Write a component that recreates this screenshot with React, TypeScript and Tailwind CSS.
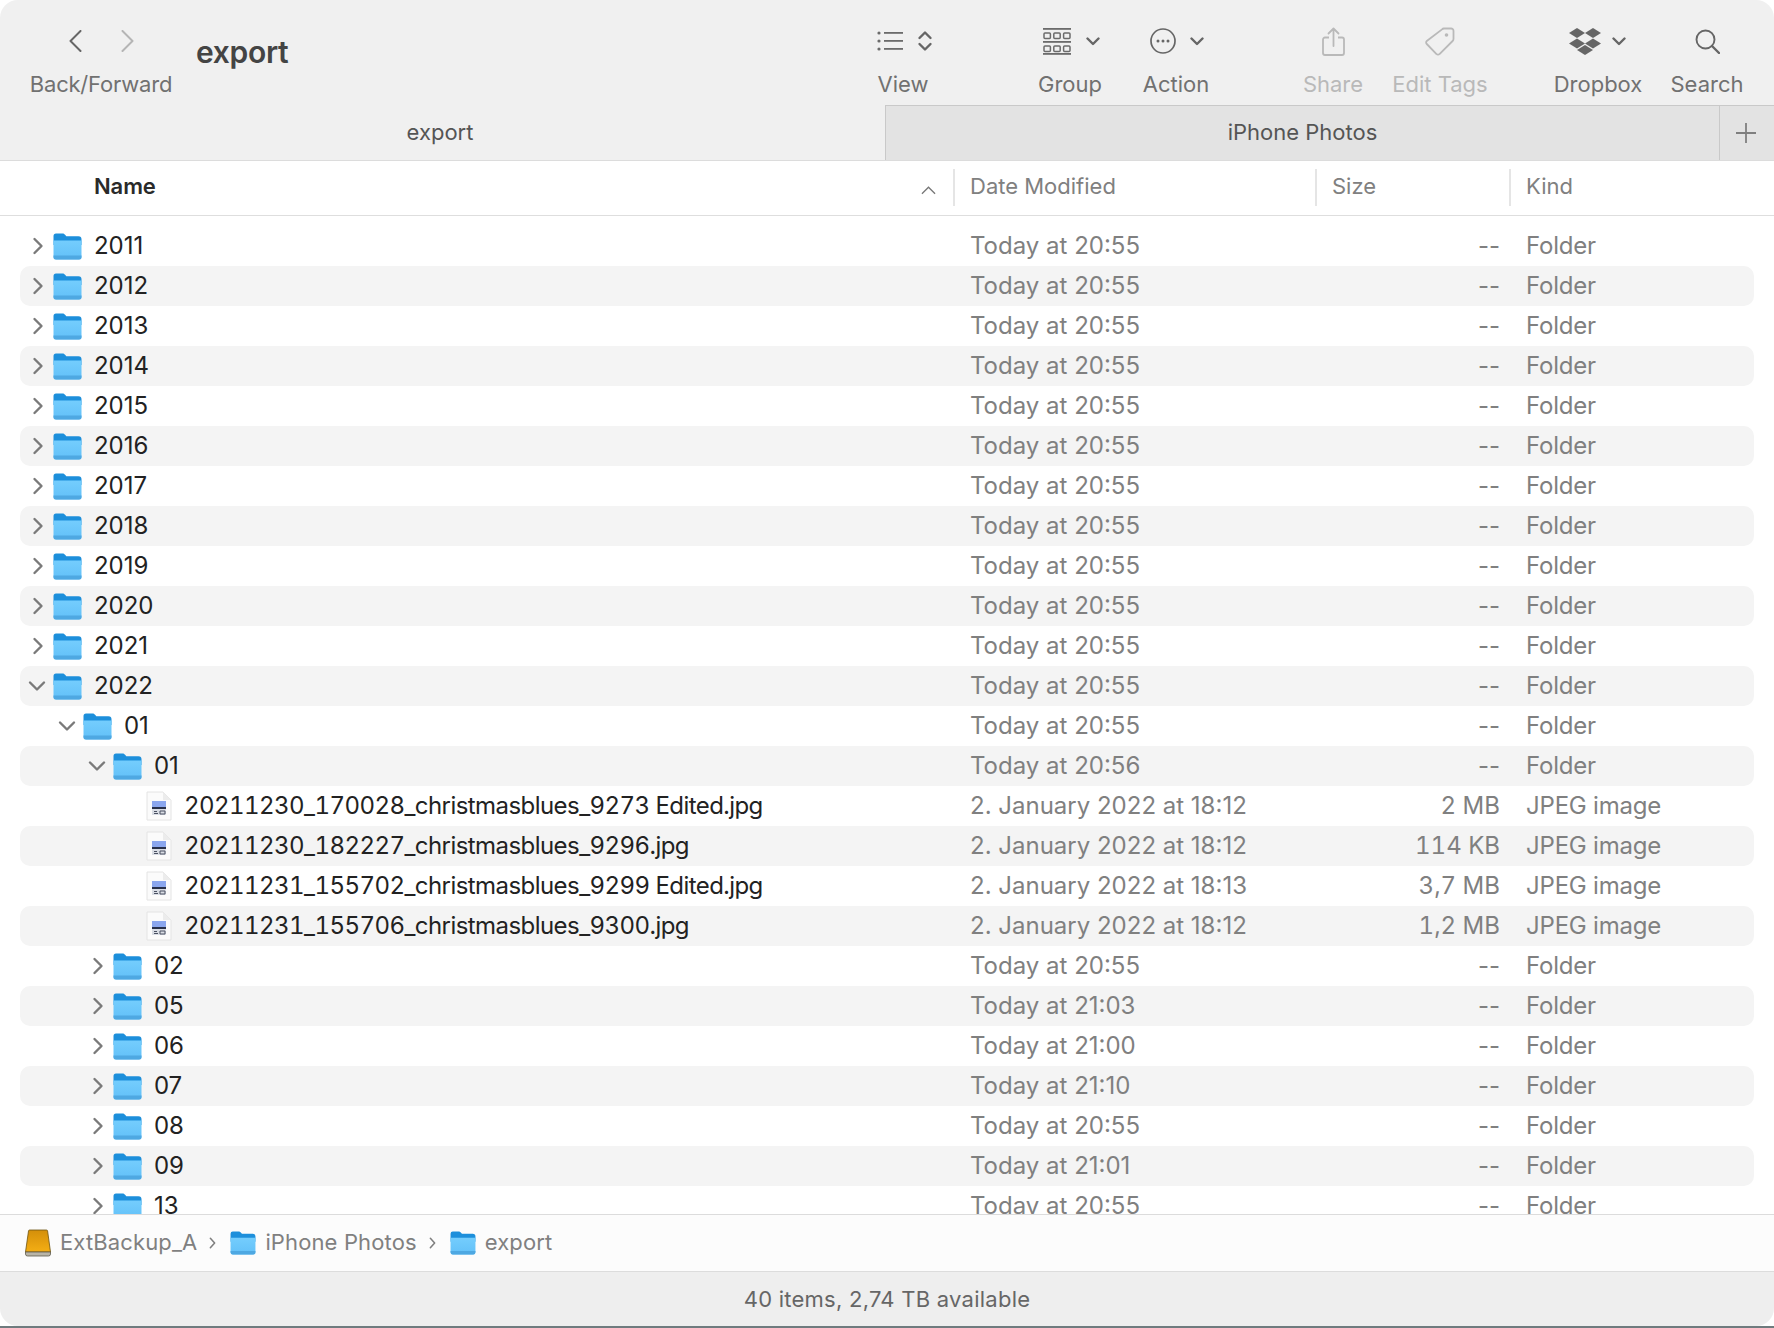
import React from "react";

const F = "[font-family:Inter,'Liberation_Sans',sans-serif]";

type Row = { name: string; date: string; size: string; kind: string; level: number; open?: boolean; file?: boolean };

const T55 = "Today at 20:55";
const folder = (name: string, level: number, date = T55, open = false): Row => ({ name, date, size: "--", kind: "Folder", level, open });
const file = (name: string, date: string, size: string): Row => ({ name, date, size, kind: "JPEG image", level: 3, file: true });

const rows: Row[] = [
  folder("2011", 0), folder("2012", 0), folder("2013", 0), folder("2014", 0), folder("2015", 0), folder("2016", 0),
  folder("2017", 0), folder("2018", 0), folder("2019", 0), folder("2020", 0), folder("2021", 0),
  folder("2022", 0, T55, true),
  folder("01", 1, T55, true),
  folder("01", 2, "Today at 20:56", true),
  file("20211230_170028_christmasblues_9273 Edited.jpg", "2. January 2022 at 18:12", "2 MB"),
  file("20211230_182227_christmasblues_9296.jpg", "2. January 2022 at 18:12", "114 KB"),
  file("20211231_155702_christmasblues_9299 Edited.jpg", "2. January 2022 at 18:13", "3,7 MB"),
  file("20211231_155706_christmasblues_9300.jpg", "2. January 2022 at 18:12", "1,2 MB"),
  folder("02", 2),
  folder("05", 2, "Today at 21:03"),
  folder("06", 2, "Today at 21:00"),
  folder("07", 2, "Today at 21:10"),
  folder("08", 2),
  folder("09", 2, "Today at 21:01"),
  folder("13", 2),
];

function FolderIcon({ small = false }: { small?: boolean }) {
  return (
    <svg viewBox="0 0 29 27" className={small ? "w-[26px] h-[24px] shrink-0" : "w-[29px] h-[27px] shrink-0"}>
      <defs>
        <linearGradient id="fb" x1="0" y1="0" x2="0" y2="1">
          <stop offset="0" stopColor="#74cdfd" />
          <stop offset="1" stopColor="#62c0f8" />
        </linearGradient>
      </defs>
      <path d="M0.5 3a2.5 2.5 0 0 1 2.5-2.5h6.500c1.400 0 2 .6 2.800 1.600l1 1.100h12.200a3 3 0 0 1 3 3V12H.5Z" fill="#1d8fdb" />
      <path d="M.5 7.600h28V24a2.500 2.500 0 0 1-2.500 2.500H3A2.500 2.500 0 0 1 .5 24Z" fill="url(#fb)" />
      <path d="M.5 22.600h28V24a2.500 2.500 0 0 1-2.500 2.500H3A2.500 2.500 0 0 1 .5 24Z" fill="#4ea8e2" />
    </svg>
  );
}

function FileIcon() {
  return (
    <svg viewBox="0 0 26 30" className="w-[26px] h-[30px] shrink-0">
      <path d="M1 1h16l8 8v20H1Z" fill="#fbfbfb" stroke="#e4e4e4" strokeWidth="1" />
      <path d="M17 1v8h8Z" fill="#ececec" />
      <rect x="6" y="10" width="14" height="6" fill="#8aa6ee" />
      <rect x="6" y="16" width="14" height="2" fill="#27304a" />
      <rect x="6" y="18" width="14" height="6" fill="#d9dde4" />
      <path d="M8 20.500h3M8 22.500h4M14 20h5M14 23h5M14 20v3M19 20v3" stroke="#4a5162" strokeWidth="1" fill="none" />
    </svg>
  );
}

function Chevron({ open }: { open?: boolean }) {
  return open ? (
    <svg viewBox="0 0 18 12" className="w-[18px] h-[12px]">
      <path d="M2 2.500 9 9.500 16 2.500" fill="none" stroke="#7a7a7a" strokeWidth="2.400" strokeLinecap="round" strokeLinejoin="round" />
    </svg>
  ) : (
    <svg viewBox="0 0 12 18" className="w-[12px] h-[18px]">
      <path d="M2.500 2 9.500 9 2.500 16" fill="none" stroke="#7a7a7a" strokeWidth="2.400" strokeLinecap="round" strokeLinejoin="round" />
    </svg>
  );
}

function ListRow({ r, i }: { r: Row; i: number }) {
  return (
    <div className={`h-[40px] shrink-0 mx-[20px] rounded-[10px] flex items-center text-[24px] leading-none ${i % 2 ? "bg-[#f4f4f4]" : ""}`}>
      <div className="w-[935px] shrink-0 flex items-center text-[#222222] whitespace-nowrap">
        {r.file ? (
          <>
            <div className="w-[126px] shrink-0" />
            <FileIcon />
            <div className="w-[12px] shrink-0" />
            <span className="tabular-nums tracking-[-0.56px]">{r.name}</span>
          </>
        ) : (
          <>
            {r.level === 1 && <div className="w-[30px] shrink-0" />}
            {r.level === 2 && <div className="w-[60px] shrink-0" />}
            <div className={`w-[33px] shrink-0 flex items-center justify-center ${r.open ? "pl-0" : "pl-[2px]"}`}>
              <Chevron open={r.open} />
            </div>
            <FolderIcon />
            <div className="w-[12px] shrink-0" />
            <span className="tracking-[-0.05px]">{r.name}</span>
          </>
        )}
      </div>
      <div className="w-[362px] shrink-0 pl-[15px] text-[#808080] whitespace-nowrap">{r.date}</div>
      <div className={`w-[183px] shrink-0 text-right text-[#808080] whitespace-nowrap ${r.file ? "tabular-nums" : ""}`}>{r.size}</div>
      <div className="pl-[26px] text-[#808080] whitespace-nowrap tracking-[-0.2px]">{r.kind}</div>
    </div>
  );
}

function ToolItem({ w, ml, label, dim, children }: { w: string; ml: string; label: string; dim?: boolean; children: React.ReactNode }) {
  return (
    <div className={`${w} ${ml} shrink-0 flex flex-col items-center`}>
      <div className="h-[34px] flex items-center justify-center">{children}</div>
      <div className={`mt-[13px] text-[22px] leading-[26px] whitespace-nowrap ${dim ? "text-[#b9b9b9]" : "text-[#717171]"}`}>{label}</div>
    </div>
  );
}

const Small = () => (
  <svg viewBox="0 0 14 9" className="w-[14px] h-[9px]">
    <path d="M1.500 1.500 7 7l5.500-5.500" fill="none" stroke="#666666" strokeWidth="2.400" strokeLinecap="round" strokeLinejoin="round" />
  </svg>
);

const PathSep = () => (
  <svg viewBox="0 0 8 14" className="w-[7px] h-[12px] ml-[12px] mr-[14px] shrink-0">
    <path d="M1.500 1.500 6.500 7l-5 5.500" fill="none" stroke="#7f7f7f" strokeWidth="1.800" strokeLinecap="round" strokeLinejoin="round" />
  </svg>
);

export default function App() {
  return (
    <div className={`w-[1774px] h-[1328px] overflow-hidden bg-white flex flex-col ${F}`}>
      <div className="flex-1 min-h-0 flex flex-col rounded-[18px] overflow-hidden">
        {/* toolbar */}
        <div className="h-[105px] shrink-0 bg-[#f0f0f0] flex pt-[24px] pl-[26px] pr-[27px]">
          <div className="w-[150px] shrink-0 flex flex-col items-center">
            <div className="h-[34px] flex items-center gap-[39px]">
              <svg viewBox="0 0 13 22" className="w-[13px] h-[22px]">
                <path d="M11.500 1 1.500 11l10 10" fill="none" stroke="#666666" strokeWidth="2" strokeLinecap="round" strokeLinejoin="round" />
              </svg>
              <svg viewBox="0 0 13 22" className="w-[13px] h-[22px]">
                <path d="M1.500 1l10 10-10 10" fill="none" stroke="#b5b5b5" strokeWidth="2" strokeLinecap="round" strokeLinejoin="round" />
              </svg>
            </div>
            <div className="mt-[13px] text-[22px] leading-[26px] tracking-[-0.2px] text-[#717171] whitespace-nowrap">Back/Forward</div>
          </div>
          <div className="ml-[20px] mt-[10px] text-[30px] leading-[36px] font-semibold text-[#444444] tracking-[-0.3px]">export</div>
          <div className="flex-1" />
          <ToolItem w="w-[60px]" ml="ml-0" label="View">
            <svg viewBox="0 0 56 22" className="w-[56px] h-[22px] ml-[3px]">
              <g fill="#6b6b6b">
                <circle cx="2" cy="3" r="1.600" /><circle cx="2" cy="11" r="1.600" /><circle cx="2" cy="19" r="1.600" />
                <rect x="7" y="2" width="19" height="1.800" /><rect x="7" y="10" width="19" height="1.800" /><rect x="7" y="18" width="19" height="1.800" />
              </g>
              <path d="M42.500 8 48 2.500 53.500 8M42.500 14 48 19.500 53.500 14" fill="none" stroke="#666666" strokeWidth="2.400" strokeLinecap="round" strokeLinejoin="round" />
            </svg>
          </ToolItem>
          <ToolItem w="w-[80px]" ml="ml-[97px]" label="Group">
            <div className="flex items-center gap-[15px] ml-[3px]">
              <svg viewBox="0 0 28 27" className="w-[28px] h-[27px]">
                <g fill="#6b6b6b">
                  <rect x="0" y="0" width="28" height="1.800" />
                  <rect x="0" y="13" width="28" height="1.800" />
                  <rect x="0" y="25" width="28" height="1.800" />
                </g>
                <g fill="none" stroke="#6b6b6b" strokeWidth="1.500">
                  <rect x="1" y="5" width="6.400" height="5.500" rx="1" /><rect x="10.800" y="5" width="6.400" height="5.500" rx="1" /><rect x="20.600" y="5" width="6.400" height="5.500" rx="1" />
                  <rect x="1" y="18" width="6.400" height="5.500" rx="1" /><rect x="10.800" y="18" width="6.400" height="5.500" rx="1" /><rect x="20.600" y="18" width="6.400" height="5.500" rx="1" />
                </g>
              </svg>
              <Small />
            </div>
          </ToolItem>
          <ToolItem w="w-[80px]" ml="ml-[26px]" label="Action">
            <div className="flex items-center gap-[14px] ml-[1px]">
              <svg viewBox="0 0 26 26" className="w-[26px] h-[26px]">
                <circle cx="13" cy="13" r="12" fill="none" stroke="#666666" strokeWidth="1.700" />
                <circle cx="8" cy="13" r="1.500" fill="#666666" /><circle cx="13" cy="13" r="1.500" fill="#666666" /><circle cx="18" cy="13" r="1.500" fill="#666666" />
              </svg>
              <Small />
            </div>
          </ToolItem>
          <ToolItem w="w-[70px]" ml="ml-[82px]" label="Share" dim>
            <svg viewBox="0 0 23 29" className="w-[23px] h-[29px]">
              <path d="M7 10.500H3a2 2 0 0 0-2 2V26a2 2 0 0 0 2 2h17a2 2 0 0 0 2-2V12.500a2 2 0 0 0-2-2h-4" fill="none" stroke="#b9b9b9" strokeWidth="1.800" />
              <path d="M11.500 19V1.500M6.500 6.500l5-5 5 5" fill="none" stroke="#b9b9b9" strokeWidth="1.800" strokeLinecap="round" strokeLinejoin="round" />
            </svg>
          </ToolItem>
          <ToolItem w="w-[100px]" ml="ml-[22px]" label="Edit Tags" dim>
            <svg viewBox="0 0 30 29" className="w-[30px] h-[29px]">
              <path d="M19 1.500h7a2.500 2.500 0 0 1 2.500 2.500v8a3 3 0 0 1-.9 2L14.500 27a2 2 0 0 1-3 0L1.800 17a2 2 0 0 1 0-3L17 2.400a3 3 0 0 1 2-.9Z" fill="none" stroke="#b9b9b9" strokeWidth="1.800" />
              <circle cx="21.500" cy="8" r="1.800" fill="#b9b9b9" />
            </svg>
          </ToolItem>
          <ToolItem w="w-[100px]" ml="ml-[58px]" label="Dropbox">
            <div className="flex items-center gap-[11px] -ml-[1px]">
              <svg viewBox="0 0 32 27" className="w-[32px] h-[27px]">
                <g fill="#666666">
                  <path d="M8 0l8 5-8 5-8-5Z" /><path d="M24 0l8 5-8 5-8-5Z" />
                  <path d="M8 10.500l8 5-8 5-8-5Z" /><path d="M24 10.500l8 5-8 5-8-5Z" />
                  <path d="M16 17l8 5-8 5-8-5Z" />
                </g>
              </svg>
              <Small />
            </div>
          </ToolItem>
          <ToolItem w="w-[80px]" ml="ml-[19px]" label="Search">
            <svg viewBox="0 0 25 25" className="w-[25px] h-[25px]">
              <circle cx="10.500" cy="10.500" r="9" fill="none" stroke="#666666" strokeWidth="1.900" />
              <path d="M17 17l7 7" fill="none" stroke="#666666" strokeWidth="2.400" strokeLinecap="round" />
            </svg>
          </ToolItem>
        </div>

        {/* tabs */}
        <div className="h-[56px] shrink-0 flex bg-[#f0f0f0] border-b border-[#dcdcdc] text-[22px] leading-none">
          <div className="w-[885px] shrink-0 flex items-center justify-center text-[#555555] pb-[1px] pr-[5px]">export</div>
          <div className="flex-1 flex items-center justify-center bg-[#e3e3e3] border-l border-t border-[#c9c9c9] text-[#555555] pb-[2px]">iPhone Photos</div>
          <div className="w-[55px] shrink-0 flex items-center justify-center bg-[#e3e3e3] border-l border-t border-[#c9c9c9] pr-[2px]">
            <svg viewBox="0 0 20 20" className="w-[20px] h-[20px]">
              <path d="M10 0v20M0 10h20" stroke="#7f7f7f" strokeWidth="1.800" />
            </svg>
          </div>
        </div>

        {/* column header */}
        <div className="h-[55px] shrink-0 bg-white border-b border-[#dedede] flex items-center pb-[1px] text-[22px] leading-none text-[#808080]">
          <div className="w-[955px] shrink-0 h-[37px] flex items-center justify-between pl-[94px] pr-[17px] border-r-2 border-[#e5e5e5]">
            <span className="font-semibold text-[#2a2a2a] tracking-[-0.1px] pb-[3px]">Name</span>
            <svg viewBox="0 0 16 9" className="w-[15px] h-[9px] mt-[5px]">
              <path d="M1 8l7-7 7 7" fill="none" stroke="#777777" strokeWidth="1.400" />
            </svg>
          </div>
          <div className="w-[362px] shrink-0 h-[37px] flex items-center pl-[15px] pb-[3px] border-r-2 border-[#e5e5e5]">Date Modified</div>
          <div className="w-[194px] shrink-0 h-[37px] flex items-center pl-[15px] pb-[3px] border-r-2 border-[#e5e5e5]">Size</div>
          <div className="pl-[15px] pb-[3px]">Kind</div>
        </div>

        {/* list */}
        <div className="flex-1 min-h-0 bg-white overflow-hidden pt-[10px] flex flex-col">
          {rows.map((r, i) => (
            <ListRow key={i} r={r} i={i} />
          ))}
        </div>

        {/* path bar */}
        <div className="h-[58px] shrink-0 bg-[#fcfcfc] border-t border-b border-[#dcdcdc] flex items-center pl-[25px] text-[22px] leading-none tracking-[0.13px] text-[#808080] whitespace-nowrap">
          <svg viewBox="0 0 26 28" className="w-[26px] h-[28px] shrink-0">
            <defs>
              <linearGradient id="dg" x1="0" y1="0" x2="0" y2="1">
                <stop offset="0" stopColor="#d48f0a" />
                <stop offset="1" stopColor="#f4ae14" />
              </linearGradient>
            </defs>
            <path d="M4.500 1h17c.6 0 1 .4 1.100 1L25.500 23H.5L3.500 2c.1-.6.4-1 1-1Z" fill="url(#dg)" stroke="#6d5413" strokeWidth=".8" />
            <path d="M.5 23h25v2a2 2 0 0 1-2 2H2.500a2 2 0 0 1-2-2Z" fill="#b9b5a8" stroke="#5e5a4c" strokeWidth=".8" />
          </svg>
          <span className="ml-[9px] pb-[2px]">ExtBackup_A</span>
          <PathSep />
          <FolderIcon small />
          <span className="ml-[9px] pb-[2px]">iPhone Photos</span>
          <PathSep />
          <FolderIcon small />
          <span className="ml-[9px] pb-[2px]">export</span>
        </div>

        {/* status bar */}
        <div className="h-[54px] shrink-0 bg-[#eeeeee] flex items-center justify-center text-[22px] leading-none tracking-[0.25px] text-[#666666]">
          40 items, 2,74 TB available
        </div>
      </div>
      <div className="h-[2px] shrink-0 bg-[#6f7b7e]" />
    </div>
  );
}
